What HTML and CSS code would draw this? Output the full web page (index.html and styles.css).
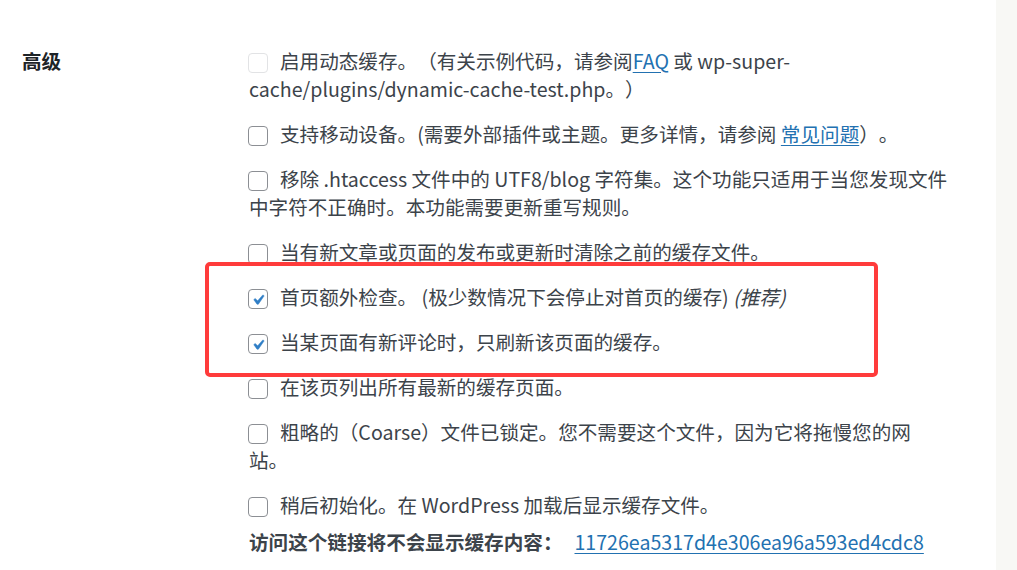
FILE: index.html
```html
<!DOCTYPE html>
<html lang="zh-CN">
<head>
<meta charset="utf-8">
<title>高级</title>
<link rel="stylesheet" href="styles.css">
</head>
<body>
<div class="page">
  <div class="main">
    <div class="label">高级</div>
    <div class="options">
      <div class="opt"><span class="cb cb-disabled"></span>启用动态缓存。（有关示例代码，请参阅<a href="#">FAQ</a> 或 wp-super-cache/plugins/dynamic-cache-test.php。）</div>
      <div class="opt"><span class="cb"></span>支持移动设备。(需要外部插件或主题。更多详情，请参阅 <a href="#">常见问题</a>）。</div>
      <div class="opt"><span class="cb"></span>移除 .htaccess 文件中的 UTF8/blog 字符集。这个功能只适用于当您发现文件中字符不正确时。本功能需要更新重写规则。</div>
      <div class="opt"><span class="cb"></span>当有新文章或页面的发布或更新时清除之前的缓存文件。</div>
      <div class="opt"><span class="cb"><svg viewBox="0 0 20 20" width="20" height="20"><path d="M14.83 4.89l1.34.94-5.81 8.38H9.02L5.78 9.67l1.34-1.25 2.57 2.4z"/></svg></span>首页额外检查。 (极少数情况下会停止对首页的缓存) <em>(推荐)</em></div>
      <div class="opt"><span class="cb"><svg viewBox="0 0 20 20" width="20" height="20"><path d="M14.83 4.89l1.34.94-5.81 8.38H9.02L5.78 9.67l1.34-1.25 2.57 2.4z"/></svg></span>当某页面有新评论时，只刷新该页面的缓存。</div>
      <div class="opt"><span class="cb"></span>在该页列出所有最新的缓存页面。</div>
      <div class="opt"><span class="cb"></span>粗略的（Coarse）文件已锁定。您不需要这个文件，因为它将拖慢您的网站。</div>
      <div class="opt"><span class="cb"></span>稍后初始化。在 WordPress 加载后显示缓存文件。</div>
      <div class="opt visit"><strong>访问这个链接将不会显示缓存内容：</strong><a href="#" class="hash">11726ea5317d4e306ea96a593ed4cdc8</a></div>
    </div>
    <div class="highlight"></div>
  </div>
  <div class="strip"></div>
</div>
</body>
</html>
```

FILE: styles.css
```css
html, body {
  margin: 0;
  padding: 0;
  background: #ffffff;
}
body {
  font-family: "Noto Sans CJK SC", "Noto Sans", sans-serif;
  font-size: 19.6px;
  color: #3c434a;
  text-spacing-trim: space-all;
}
.page {
  display: flex;
  height: 570px;
  overflow: hidden;
}
.main {
  position: relative;
  width: 996px;
  flex: none;
  box-sizing: border-box;
  padding: 47px 0 0 22px;
  display: grid;
  grid-template-columns: 227px 699px;
  align-content: start;
}
.strip {
  flex: 1;
  background: #f8f8f5;
}
.label {
  font-weight: 700;
  color: #1d2327;
  line-height: 28px;
}
.options {
  display: flex;
  flex-direction: column;
  gap: 17px;
}
.opt {
  line-height: 28px;
}
.opt a {
  color: #2271b1;
  text-decoration: underline;
  text-underline-offset: 3px;
}
.opt em {
  font-style: italic;
}
.cb {
  display: inline-block;
  box-sizing: border-box;
  width: 20px;
  height: 20px;
  border: 1px solid #8c8f94;
  border-radius: 4px;
  background: #fff;
  margin-left: -1px;
  margin-right: 12px;
  vertical-align: -4px;
  position: relative;
}
.cb svg {
  position: absolute;
  left: -1px;
  top: 0px;
  fill: #2f7ec6;
  stroke: #2f7ec6;
  stroke-width: 0.5;
}
.cb-disabled {
  border-color: #e2e3e5;
}
.visit {
  margin-top: -8px;
}
.visit strong {
  font-weight: 700;
  color: #3c434a;
}
.visit .hash {
  margin-left: 12px;
}
.highlight {
  position: absolute;
  left: 205px;
  top: 262px;
  width: 673px;
  height: 115px;
  box-sizing: border-box;
  border: 4px solid #ff3b3b;
  border-radius: 5px;
  pointer-events: none;
}
```
